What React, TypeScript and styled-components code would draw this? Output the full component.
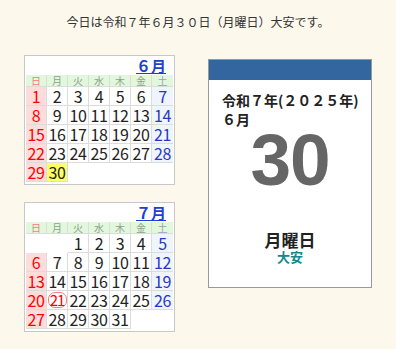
import React from 'react';
import styled, { createGlobalStyle } from 'styled-components';

const GlobalStyle = createGlobalStyle`
    body {
        margin: 0;
        background: #fcf8ec;
        font-family: 'Noto Sans CJK JP', 'Noto Sans', sans-serif;
        color: #222;
    }
`;

const Page = styled.div`
    padding-top: 14px;
`;

const Headline = styled.div`
    text-align: center;
    font-size: 12px;
    line-height: 16px;
    color: #333;
`;

const Body = styled.div`
    display: flex;
    align-items: flex-start;
    gap: 33px;
    padding: 25px 0 0 24px;
`;

const CalendarColumn = styled.div`
    display: flex;
    flex-direction: column;
    gap: 17px;
`;

const MonthBox = styled.div`
    width: 151px;
    box-sizing: border-box;
    border: 1px solid #c8c8c8;
    background: #fff;
    padding: 0 0 2px 1px;
`;

const MonthTitle = styled.div`
    height: 19px;
    display: flex;
    justify-content: flex-end;
    align-items: center;
    padding-right: 8px;

    a {
        font-size: 15px;
        font-weight: bold;
        color: #1f3fd0;
        text-decoration: underline;
        line-height: 17px;
    }
`;

const Grid = styled.div`
    display: grid;
    grid-template-columns: repeat(7, 21px);
    grid-auto-rows: 19px;
    grid-template-rows: 12px;
`;

type Kind = 'sun' | 'sat' | 'day';

const HeadCell = styled.div<{ $kind: Kind; $last: boolean }>`
    box-sizing: border-box;
    display: flex;
    align-items: center;
    justify-content: center;
    background: #e2f8dc;
    border-right: ${p => (p.$last ? 'none' : '1px solid #dcdcdc')};
    border-bottom: 1px solid #dcdcdc;
    font-size: 10px;
    line-height: 11px;
    color: ${p => (p.$kind === 'sun' ? '#f47a7a' : p.$kind === 'sat' ? '#9aa0b8' : '#8fa08c')};
`;

const DayCell = styled.div<{ $kind: Kind; $last: boolean; $today?: boolean; $empty?: boolean }>`
    box-sizing: border-box;
    display: flex;
    align-items: center;
    justify-content: center;
    font-size: 16px;
    line-height: 18px;
    letter-spacing: -0.5px;
    border-right: ${p => (p.$last || p.$empty ? 'none' : '1px solid #dcdcdc')};
    border-bottom: ${p => (p.$empty ? 'none' : '1px solid #dcdcdc')};
    background: ${p =>
        p.$empty ? '#fff' : p.$today ? '#ffff66' : p.$kind === 'sun' ? '#ffdcdc' : p.$kind === 'sat' ? '#eef5fd' : '#fff'};
    color: ${p => (p.$kind === 'sun' ? '#ff0000' : p.$kind === 'sat' ? '#2a36c4' : '#222')};
`;

// public holiday: red number inside a rounded outline
const Holiday = styled.span`
    display: flex;
    align-items: center;
    justify-content: center;
    flex: none;
    width: 19px;
    height: 16px;
    border: 1px solid #f08080;
    border-radius: 7px;
    color: #ff0000;
    box-sizing: border-box;
    letter-spacing: -1px;
    font-size: 15px;
`;

const WEEK = ['日', '月', '火', '水', '木', '金', '土'];

interface MonthProps {
    label: string;
    startDay: number;
    days: number;
    today?: number;
    holidays?: number[];
}

const kindOf = (col: number): Kind => (col === 0 ? 'sun' : col === 6 ? 'sat' : 'day');

const Month: React.FC<MonthProps> = ({ label, startDay, days, today, holidays = [] }) => {
    const cells: (number | null)[] = [];
    for (let i = 0; i < startDay; i++) cells.push(null);
    for (let d = 1; d <= days; d++) cells.push(d);
    while (cells.length % 7) cells.push(null);

    return (
        <MonthBox>
            <MonthTitle>
                <a>{label}</a>
            </MonthTitle>
            <Grid>
                {WEEK.map((w, i) => (
                    <HeadCell key={w} $kind={kindOf(i)} $last={i === 6}>
                        {w}
                    </HeadCell>
                ))}
                {cells.map((d, i) => {
                    const col = i % 7;
                    const holiday = d !== null && holidays.includes(d);
                    return (
                        <DayCell
                            key={i}
                            $kind={kindOf(col)}
                            $last={col === 6}
                            $today={d === today}
                            $empty={d === null}
                        >
                            {holiday ? <Holiday>{d}</Holiday> : d}
                        </DayCell>
                    );
                })}
            </Grid>
        </MonthBox>
    );
};

const Card = styled.div`
    margin-top: 4px;
    width: 164px;
    height: 229px;
    box-sizing: border-box;
    border: 1px solid #999;
    background: #fff;
    display: flex;
    flex-direction: column;
`;

const CardBar = styled.div`
    height: 20px;
    background: #33659f;
`;

const Era = styled.div`
    padding: 11px 0 0 13px;
    font-size: 14px;
    font-weight: bold;
    line-height: 19px;
    color: #222;
`;

const BigDay = styled.div`
    margin-top: 1px;
    text-align: center;
    font-family: 'Liberation Sans', Arial, sans-serif;
    font-weight: bold;
    font-size: 73px;
    line-height: 60px;
    letter-spacing: -1px;
    color: #666;
`;

const Weekday = styled.div`
    margin-top: 40px;
    text-align: center;
    font-size: 17px;
    font-weight: bold;
    line-height: 20px;
    color: #222;
`;

const Rokuyo = styled.div`
    text-align: center;
    font-size: 13px;
    font-weight: bold;
    line-height: 14px;
    color: #14888c;
`;

export default function App() {
    return (
        <Page>
            <GlobalStyle />
            <Headline>今日は令和７年６月３０日（月曜日）大安です。</Headline>
            <Body>
                <CalendarColumn>
                    <Month label="６月" startDay={0} days={30} today={30} />
                    <Month label="７月" startDay={2} days={31} holidays={[21]} />
                </CalendarColumn>
                <Card>
                    <CardBar />
                    <Era>
                        令和７年(２０２５年)
                        <br />
                        ６月
                    </Era>
                    <BigDay>30</BigDay>
                    <Weekday>月曜日</Weekday>
                    <Rokuyo>大安</Rokuyo>
                </Card>
            </Body>
        </Page>
    );
}
